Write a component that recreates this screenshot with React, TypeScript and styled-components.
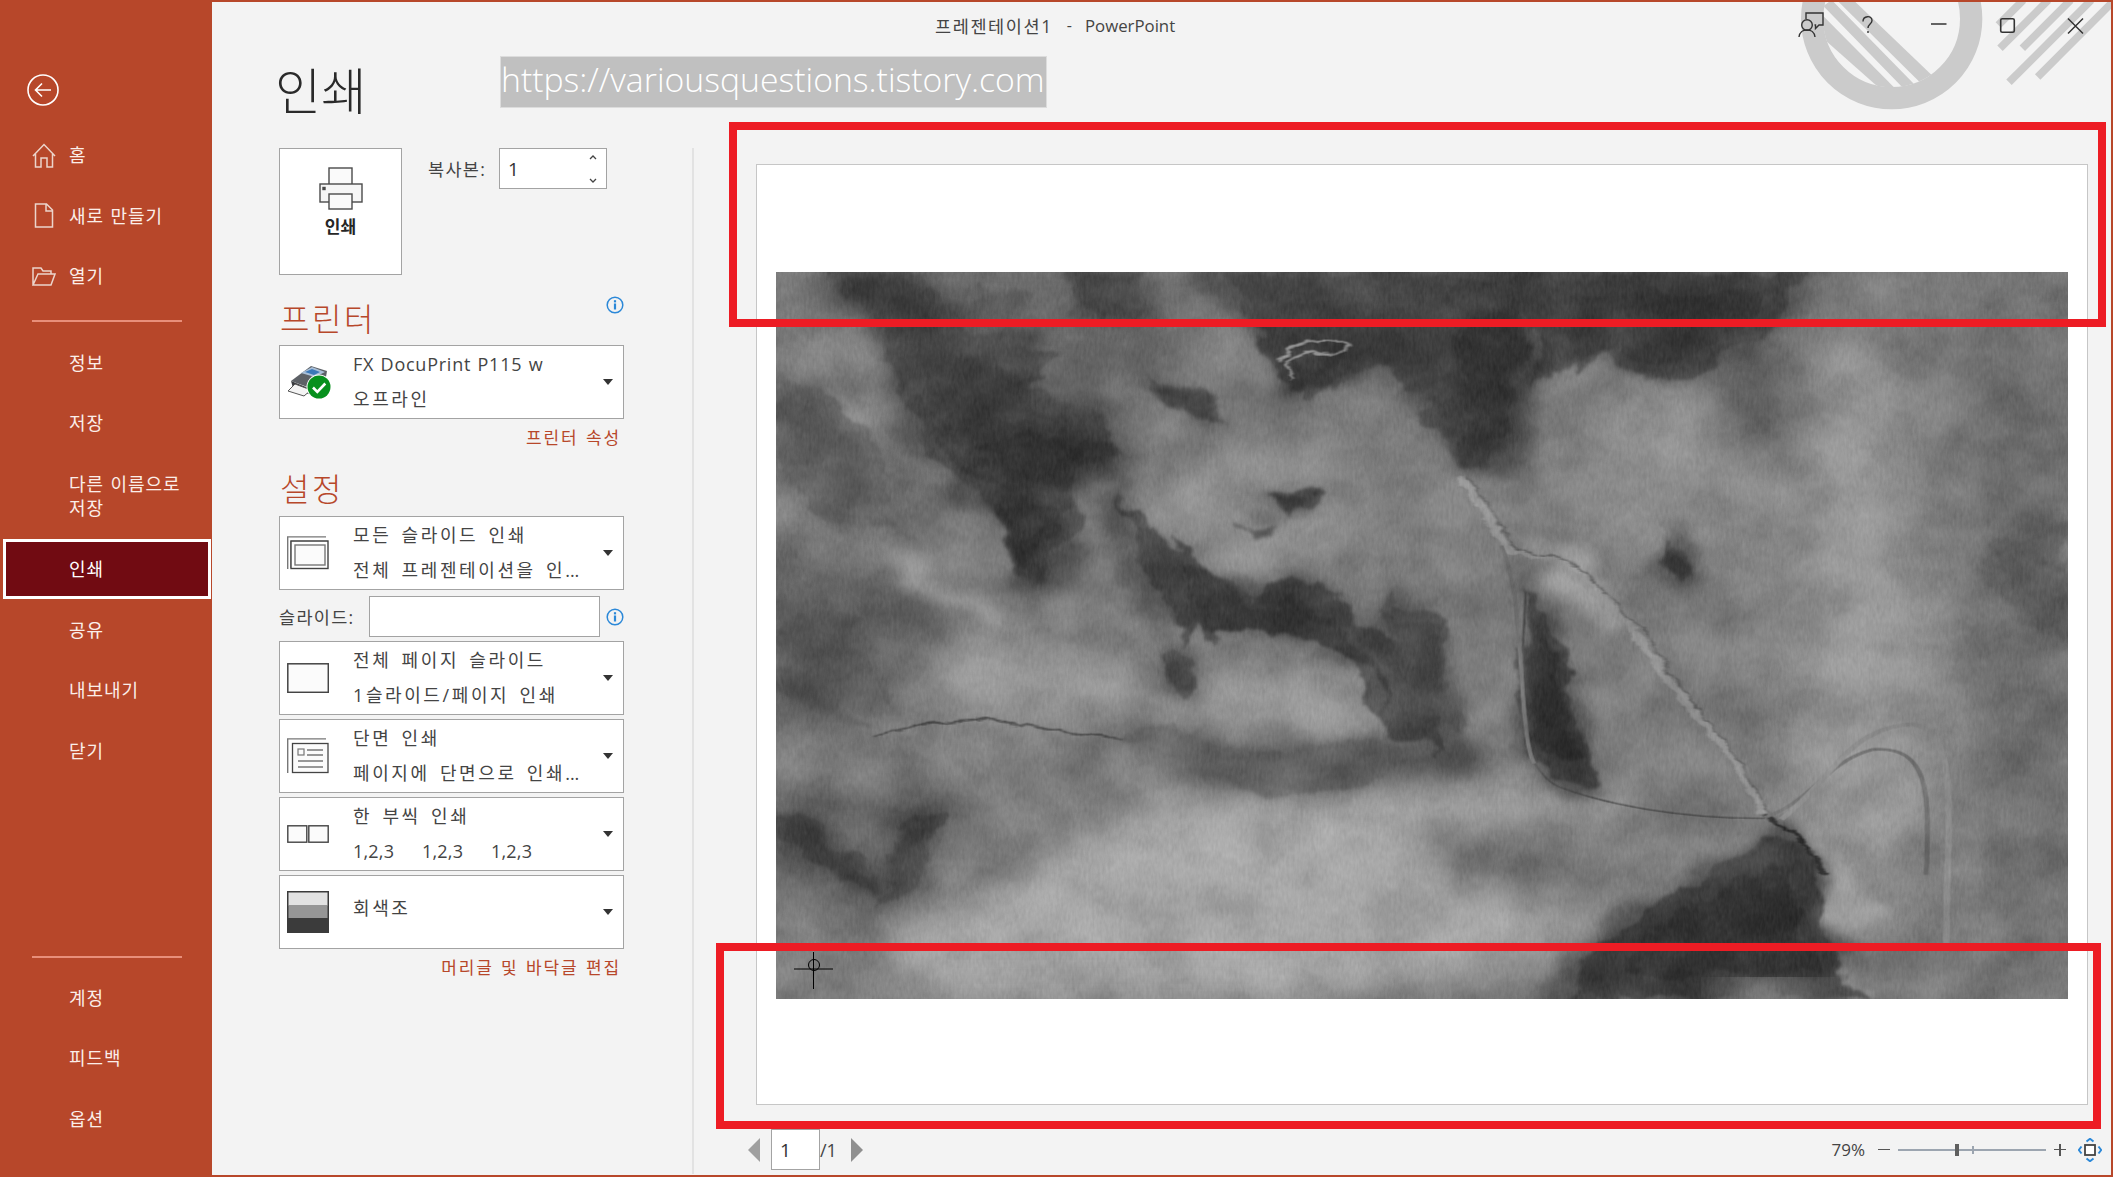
import React from "react";
import styled, { createGlobalStyle } from "styled-components";

const ACCENT = "#b7472a";
const BLUE = "#2b88d8";

const Global = createGlobalStyle`
  html, body { margin: 0; padding: 0; background: #f3f3f3; }
  body { font-family: "Open Sans", "Noto Sans CJK KR", sans-serif; color: #444; }
  * { box-sizing: border-box; }
`;

const Window = styled.div`
  position: relative;
  width: 2113px;
  height: 1177px;
  overflow: hidden;
  display: grid;
  grid-template-columns: 212px 1fr;
  background: #f3f3f3;
  border-top: 2px solid ${ACCENT};
  border-right: 2px solid ${ACCENT};
  border-bottom: 2px solid ${ACCENT};
`;

const Sidebar = styled.nav`
  background: ${ACCENT};
  display: flex;
  flex-direction: column;
  padding-top: 72px;
  color: #fbeee9;
  height: 1175px;
`;
const BackButton = styled.div`
  width: 32px;
  height: 32px;
  margin: 0 0 19px 27px;
`;
const NavItem = styled.div<{ $tall?: boolean; $active?: boolean }>`
  display: flex;
  align-items: center;
  height: ${(p) => (p.$tall ? 85 : 60.5)}px;
  padding-left: 32px;
  font-size: 18px;
  letter-spacing: 0.9px;
  word-spacing: 1px;
  line-height: 24px;
  flex: none;
  ${(p) =>
    p.$active &&
    `margin:0 1px 1px 3px;background:#710b12;border:3px solid #fff;color:#fff;padding-left:26px;height:60px;`}
`;
const NavIcon = styled.span`
  width: 37px;
  flex: none;
  display: flex;
  align-items: center;
`;
const NavRule = styled.div<{ $auto?: boolean }>`
  height: 2px;
  flex: none;
  background: #e88f7a;
  margin: ${(p) => (p.$auto ? "auto 30px 10px 32px" : "13px 30px 11px 32px")};
`;
const NavBottom = styled.div`
  display: flex;
  flex-direction: column;
  margin-bottom: 28px;
`;

const Main = styled.main`
  display: flex;
  flex-direction: column;
  min-width: 0;
  position: relative;
`;
const Deco = styled.svg`
  position: absolute;
  top: -2px;
  pointer-events: none;
`;
const TitleBar = styled.header`
  position: relative;
  height: 46px;
  display: flex;
  align-items: center;
  padding-left: 723px;
  font-size: 17.5px;
  letter-spacing: 1.6px;
  color: #444;
  white-space: pre;
`;
const TitleLatin = styled.span`
  font-size: 16.8px;
  letter-spacing: 0;
  margin-left: 13px;
`;
const TitleDash = styled.span`
  font-size: 16px;
  letter-spacing: 0;
  margin-left: 14px;
`;
const WinIcon = styled.svg`
  position: absolute;
  top: 0;
  left: 0;
  color: #333;
`;

const Body = styled.div`
  flex: 1;
  display: flex;
  min-height: 0;
`;
const PrintPanel = styled.section`
  width: 480px;
  flex: none;
  padding-left: 67px;
  padding-right: 68px;
`;
const PageTitle = styled.h1`
  margin: 0 0 12px -4px;
  height: 88px;
  line-height: 86px;
  font-size: 50px;
  font-weight: 300;
  color: #2a2a2a;
`;
const TopRow = styled.div`
  display: flex;
  height: 127px;
`;
const PrintButton = styled.div`
  width: 123px;
  height: 127px;
  background: #fff;
  border: 1px solid #a3a3a3;
  display: flex;
  flex-direction: column;
  align-items: center;
  padding-top: 18px;
`;
const PrintLabel = styled.span`
  font-size: 17px;
  font-weight: 700;
  color: #262626;
  line-height: 24px;
  margin-top: 5px;
`;
const Copies = styled.div`
  display: flex;
  align-items: center;
  height: 41px;
  margin-left: 26px;
`;
const FieldLabel = styled.span<{ $w: number }>`
  width: ${(p) => p.$w}px;
  font-size: 17.5px;
  letter-spacing: 1.3px;
  line-height: 38px;
  color: #444;
  flex: none;
`;
const Spin = styled.div`
  width: 108px;
  height: 41px;
  background: #fff;
  border: 1px solid #a3a3a3;
  display: flex;
  align-items: center;
  justify-content: space-between;
  padding: 0 8px;
  font-size: 19px;
  color: #333;
`;
const SpinArrows = styled.svg`
  display: block;
`;
const HeadRow = styled.div<{ $h: number; $pt: number }>`
  height: ${(p) => p.$h}px;
  padding-top: ${(p) => p.$pt}px;
  display: flex;
  justify-content: space-between;
  align-items: flex-start;
`;
const SectionHead = styled.h2<{ $mt?: number }>`
  margin: ${(p) => p.$mt ?? 0}px 0 0 1px;
  font-size: 32px;
  line-height: 40px;
  font-weight: 300;
  letter-spacing: 2.5px;
  color: ${ACCENT};
`;
const InfoWrap = styled.svg`
  width: 18px;
  height: 18px;
  flex: none;
`;
const Select = styled.div<{ $mt?: number }>`
  position: relative;
  height: 74px;
  margin-top: ${(p) => p.$mt ?? 0}px;
  background: #fff;
  border: 1px solid #a3a3a3;
  display: flex;
  align-items: center;
  padding-left: 7px;
`;
const SelectIcon = styled.span`
  width: 66px;
  flex: none;
  display: flex;
  align-items: center;
`;
const Lines = styled.div<{ $single?: boolean }>`
  flex: 1;
  padding-bottom: ${(p) => (p.$single ? 8 : 0)}px;
  font-size: 18px;
  line-height: 35px;
  letter-spacing: 2.6px;
  word-spacing: 3px;
  color: #444;
  white-space: pre;
`;
const Latin = styled.span`
  letter-spacing: 0.75px;
  word-spacing: 1px;
`;
const Dots = styled.span`
  letter-spacing: 0;
`;
const Collation = styled.span`
  display: inline-block;
  width: 69px;
  letter-spacing: 0.2px;
`;
const Caret = styled.span`
  position: absolute;
  right: 10px;
  top: 33px;
  width: 0;
  height: 0;
  border-left: 5.5px solid transparent;
  border-right: 5.5px solid transparent;
  border-top: 6px solid #333;
`;
const LinkRow = styled.div`
  height: 36px;
  display: flex;
  align-items: center;
  justify-content: flex-end;
  padding: 0 3px 2px 0;
  font-size: 17px;
  letter-spacing: 1.9px;
  word-spacing: 1px;
  color: ${ACCENT};
`;
const SlideRow = styled.div`
  display: flex;
  align-items: center;
  height: 41px;
  margin-top: 6px;
`;
const SlideInput = styled.div`
  width: 231px;
  height: 41px;
  background: #fff;
  border: 1px solid #a3a3a3;
  margin-right: 6px;
  flex: none;
`;
const VRule = styled.div`
  width: 2px;
  flex: none;
  background: #e2e2e2;
  margin-top: 100px;
  margin-bottom: 3px;
`;

const Preview = styled.section`
  flex: 1;
  min-width: 0;
  padding: 116px 0 0 54px;
`;
const Page = styled.div`
  position: relative;
  width: 1332px;
  height: 941px;
  margin-left: 8px;
  background: #fff;
  border: 1px solid #c6c6c6;
  padding: 107px 0 0 19px;
`;
const Texture = styled.svg`
  display: block;
  width: 1292px;
  height: 727px;
`;
const Pager = styled.div`
  display: flex;
  align-items: center;
  height: 41px;
  margin-top: 24px;
`;
const PagerArrow = styled.span<{ $dir: "l" | "r" }>`
  width: 0;
  height: 0;
  border-top: 12px solid transparent;
  border-bottom: 12px solid transparent;
  ${(p) =>
    p.$dir === "l"
      ? "border-right: 12px solid #9f9f9f; margin-right: 11px;"
      : "border-left: 12px solid #8f8f8f; margin-left: 14px;"}
`;
const PageInput = styled.div`
  width: 49px;
  height: 41px;
  background: #fff;
  border: 1px solid #a3a3a3;
  display: flex;
  align-items: center;
  padding-left: 8px;
  font-size: 19px;
  color: #333;
`;
const PageTotal = styled.span`
  font-size: 18px;
  color: #444;
`;
const Zoom = styled.div`
  margin-left: auto;
  margin-right: 9px;
  display: flex;
  align-items: center;
`;
const ZoomPct = styled.span`
  font-size: 17px;
  color: #444;
  margin-right: 13px;
`;
const ZoomBtn = styled.span`
  position: relative;
  width: 12px;
  height: 12px;
  &::before {
    content: "";
    position: absolute;
    left: 0;
    right: 0;
    top: 5px;
    height: 1.5px;
    background: #555;
  }
`;
const ZoomPlus = styled(ZoomBtn)`
  &::after {
    content: "";
    position: absolute;
    top: 0;
    bottom: 0;
    left: 5px;
    width: 1.5px;
    background: #555;
  }
`;
const Track = styled.div`
  position: relative;
  width: 148px;
  height: 2px;
  margin: 0 8px;
  background: #9ca5b0;
`;
const Thumb = styled.span`
  position: absolute;
  left: 57px;
  top: -5px;
  width: 4px;
  height: 12px;
  background: #5f5f5f;
`;
const Tick = styled.span`
  position: absolute;
  left: 74px;
  top: -3px;
  width: 2px;
  height: 8px;
  background: #9ca5b0;
`;
const FitIcon = styled.svg`
  margin-left: 12px;
`;

const Watermark = styled.div`
  position: absolute;
  left: 500px;
  top: 54px;
  width: 547px;
  height: 52px;
  background: #c0c0c0;
  border: 1px solid #dcdcdc;
  color: #fff;
  font-family: "Open Sans", sans-serif;
  font-size: 33.75px;
  font-weight: 300;
  line-height: 45px;
  white-space: nowrap;
`;
const RedBox = styled.div<{ $l: number; $t: number; $w: number; $h: number }>`
  position: absolute;
  left: ${(p) => p.$l}px;
  top: ${(p) => p.$t}px;
  width: ${(p) => p.$w}px;
  height: ${(p) => p.$h}px;
  border: 8px solid #ed1c24;
  pointer-events: none;
`;
const Crosshair = styled.svg`
  position: absolute;
  left: 37px;
  top: 787px;
  color: #000;
`;

const Info = () => (
  <InfoWrap viewBox="0 0 18 18">
    <circle cx="9" cy="9" r="7.8" fill="none" stroke={BLUE} strokeWidth="1.5" />
    <rect x="7.9" y="7.5" width="2.2" height="6" fill={BLUE} />
    <rect x="7.9" y="4.2" width="2.2" height="2.2" fill={BLUE} />
  </InfoWrap>
);

const icoProps = { fill: "none", stroke: "#444", strokeWidth: 1.4 };
const AllSlides = () => (
  <svg width="42" height="34" viewBox="0 0 42 34">
    <path d="M.7 33V.9H39" fill="none" stroke="#777" strokeWidth="1.4" />
    <path d="M3.5 32V5H41" fill="none" stroke="#aaa" strokeWidth="1" />
    <rect x="4" y="5" width="37" height="27.5" {...icoProps} />
    <rect x="8" y="9" width="30" height="20" fill="#fbfbfb" stroke="#777" strokeWidth="1.4" />
  </svg>
);
const FullPage = () => (
  <svg width="42" height="30" viewBox="0 0 42 30">
    <rect x=".8" y=".8" width="40.5" height="28.5" fill="#fbfbfb" stroke="#444" strokeWidth="1.5" />
  </svg>
);
const Sided = () => (
  <svg width="42" height="36" viewBox="0 0 42 36">
    <path d="M.7 35V.9H39" fill="none" stroke="#777" strokeWidth="1.4" />
    <rect x="5.5" y="5.5" width="35.5" height="29" fill="#fbfbfb" stroke="#444" strokeWidth="1.3" />
    <rect x="11" y="11" width="6" height="6" fill="none" stroke="#777" strokeWidth="1.2" />
    <path d="M20 12h16M20 17h16M11 23h25M11 29h25" stroke="#777" strokeWidth="1.4" />
  </svg>
);
const Collate = () => (
  <svg width="42" height="18" viewBox="0 0 42 18">
    <rect x=".8" y=".8" width="19" height="16.4" fill="#fbfbfb" stroke="#444" strokeWidth="1.4" />
    <rect x="21.8" y=".8" width="19.4" height="16.4" fill="#fbfbfb" stroke="#444" strokeWidth="1.4" />
  </svg>
);
const Gray = () => (
  <svg width="42" height="42" viewBox="0 0 42 42">
    <rect width="42" height="42" fill="#3b3b3b" />
    <rect x="1.5" y="1.5" width="39" height="13" fill="#e2e2e2" />
    <rect x="1.5" y="14" width="39" height="13" fill="#969696" />
  </svg>
);
const PrinterOk = () => (
  <svg width="46" height="38" viewBox="0 0 46 38">
    <path d="M4 18 L24 3 L40 8 L38 20 L26 26 Z" fill="#5d6166" />
    <path d="M14 10 L25 4 L38 9 L28 14 Z" fill="#a9bfd8" />
    <path d="M18 9 L25 6 L33 9 L27 12 Z" fill="#3b78b8" />
    <path d="M4 18 L24 26 L24 32 L6 25 Z" fill="#3a3c40" />
    <path d="M1 28 L8 21 L24 27 L17 33 Z" fill="#f4f4f4" stroke="#555" strokeWidth="1" />
    <circle cx="32" cy="24" r="12.5" fill="#fff" />
    <circle cx="32" cy="24" r="11.5" fill="#07901d" />
    <path d="M26 24.5l4.3 4.3 8-8.3" fill="none" stroke="#fff" strokeWidth="2.6" />
  </svg>
);

type Rough = [string, string];
const SOFT: Rough[] = [
  ["450,1120 1000,1120 1060,1250 900,1340 1000,1450 640,1568 150,1568 120,1400 300,1300", "#a8a8a8"],
  ["1240,220 1330,120 1420,900 1370,1400 1260,1200 1220,800", "#989898"],
  ["180,800 420,820 470,950 350,960 160,970", "#9c9c9c"],
  ["540,860 700,860 730,1000 580,1020 500,1000", "#a0a0a0"],
  ["1000,260 1220,280 1200,520 1040,640 950,480", "#8e8e8e"],
  ["1470,0 1568,0 1568,1568 1500,1568 1470,700", "#6a6a6a"],
  ["0,600 120,620 220,780 120,960 0,1000", "#626262"],
  ["790,1190 1010,1180 1020,1290 880,1340 780,1290", "#747474"],
  ["1050,130 1240,130 1240,400 1180,400 1130,240", "#5e5e5e"],
  ["0,0 1250,0 1250,90 0,90", "#646464"],
  ["130,100 450,100 420,480 300,500 170,380", "#646464"],
  ["420,1000 800,1000 760,1110 500,1120", "#6a6a6a"],
  ["560,100 900,100 880,420 760,300", "#666666"],
  ["0,1120 210,1120 190,1400 100,1400 0,1300", "#606060"],
  ["450,400 700,420 720,600 560,660 470,560", "#919191"],
];
const DARK: Rough[] = [
  ["910,0 1250,0 1230,80 1190,140 1120,225 1070,235 1000,170 960,190 920,260", "#323232"],
  ["60,0 190,0 200,110 120,120", "#3e3e3e"],
  ["240,30 300,60 280,110 240,90", "#505050"],
  ["350,0 450,0 440,95 380,110", "#3c3c3c"],
  ["130,120 220,120 340,170 300,250 400,310 410,390 350,470 365,540 310,690 270,520 190,400 150,260", "#3a3a3a"],
  ["190,340 350,330 410,380 340,470 280,470 225,420", "#2c2c2c"],
  ["260,480 350,480 320,670 295,660", "#2c2c2c"],
  ["450,240 510,250 560,330 500,310", "#3c3c3c"],
  ["540,0 860,0 905,200 880,420 830,420 800,300 720,180 640,270 590,120", "#3e3e3e"],
  ["820,20 910,20 890,340 835,420 825,280", "#2e2e2e"],
  ["420,470 500,640 590,700 630,660 730,780 805,900 805,1040 750,1000 730,850 640,790 510,760 500,810 450,680", "#2e2e2e"],
  ["740,680 800,750 830,1000 780,940 745,820", "#424242"],
  ["915,690 965,860 992,1105 955,1105 905,1020 902,900", "#282828"],
  ["1085,580 1115,600 1115,660 1095,680 1075,620", "#303030"],
  ["600,470 650,470 655,520 620,540", "#303030"],
  ["560,540 600,545 595,570 565,565", "#4a4a4a"],
  ["1000,1440 1130,1300 1210,1220 1260,1260 1275,1450 1325,1568 960,1568", "#2a2a2a"],
  ["0,1170 50,1190 100,1260 130,1360 60,1280 0,1230", "#3c3c3c"],
  ["150,1190 200,1170 185,1300 130,1370 130,1280", "#3a3a3a"],
  ["0,690 90,760 70,900 120,980 40,950 0,880", "#505050"],
  ["420,990 520,1090 600,1130 720,1100 800,1040 730,1010 600,1030 480,990", "#5c5c5c"],
  ["0,240 60,250 130,380 150,560 60,540 0,400", "#5a5a5a"],
  ["1470,600 1568,540 1568,800 1500,720", "#555555"],
  ["480,810 510,830 500,920 480,900", "#404040"],
  ["30,800 120,810 130,930 60,950", "#555555"],
  ["590,120 720,130 700,220 620,260", "#2e2e2e"],
];
const LIGHT: Rough[] = [
  ["60,250 110,300 130,360 90,340", "#989898"],
  ["130,600 190,610 250,700 280,790 230,740 150,670", "#9a9a9a"],
  ["1210,1150 1290,1230 1340,1370 1310,1450 1275,1400 1270,1260", "#a0a0a0"],
  ["1290,1480 1340,1568 1310,1568", "#a8a8a8"],
  ["900,570 960,580 1040,760 1000,780", "#9c9c9c"],
];

// Terraced copies of a polygon around its centre give the banded look of the marble.
const scalePoints = (pts: string, k: number) => {
  const xy = pts.split(" ").map((s) => s.split(",").map(Number));
  const cx = xy.reduce((a, p) => a + p[0], 0) / xy.length;
  const cy = xy.reduce((a, p) => a + p[1], 0) / xy.length;
  return xy.map((p) => `${cx + (p[0] - cx) * k},${cy + (p[1] - cy) * k}`).join(" ");
};

const Marble = () => (
  <Texture viewBox="0 0 1568 1568" preserveAspectRatio="none">
    <defs>
      <filter id="soft" x="-20%" y="-20%" width="140%" height="140%" colorInterpolationFilters="sRGB">
        <feGaussianBlur stdDeviation="30 38" />
      </filter>
      <filter id="rough" x="-20%" y="-20%" width="140%" height="140%" colorInterpolationFilters="sRGB">
        <feTurbulence type="fractalNoise" baseFrequency="0.018 0.014" numOctaves="6" seed="7" result="n" />
        <feDisplacementMap in="SourceGraphic" in2="n" scale="55" xChannelSelector="R" yChannelSelector="G" />
        <feGaussianBlur stdDeviation="2 3" />
      </filter>
      <filter id="roughSoft" x="-20%" y="-20%" width="140%" height="140%" colorInterpolationFilters="sRGB">
        <feTurbulence type="fractalNoise" baseFrequency="0.012 0.01" numOctaves="5" seed="21" result="n" />
        <feDisplacementMap in="SourceGraphic" in2="n" scale="80" xChannelSelector="R" yChannelSelector="G" />
        <feGaussianBlur stdDeviation="9 12" />
      </filter>
      <filter id="vein" x="-20%" y="-20%" width="140%" height="140%" colorInterpolationFilters="sRGB">
        <feTurbulence type="fractalNoise" baseFrequency="0.04" numOctaves="4" seed="3" result="n" />
        <feDisplacementMap in="SourceGraphic" in2="n" scale="16" xChannelSelector="R" yChannelSelector="G" />
        <feGaussianBlur stdDeviation="1 1.6" />
      </filter>
      <filter id="cloud" x="0" y="0" width="100%" height="100%" colorInterpolationFilters="sRGB">
        <feTurbulence type="fractalNoise" baseFrequency="0.014 0.009" numOctaves="6" seed="11" />
        <feColorMatrix type="matrix" values="1.8 0 0 0 -0.4  1.8 0 0 0 -0.4  1.8 0 0 0 -0.4  0 0 0 0 1" />
      </filter>
      <filter id="fine" x="0" y="0" width="100%" height="100%" colorInterpolationFilters="sRGB">
        <feTurbulence type="fractalNoise" baseFrequency="0.3 0.06" numOctaves="2" seed="5" />
        <feColorMatrix type="matrix" values="1 1 0 0 -0.5  1 1 0 0 -0.5  1 1 0 0 -0.5  0 0 0 0 0.05" />
      </filter>
    </defs>
    <rect width="1568" height="1568" fill="#7c7c7c" />
    <g filter="url(#soft)">
      {SOFT.map(([p, f], i) => (
        <polygon key={i} points={p} fill={f} />
      ))}
    </g>
    <g filter="url(#roughSoft)">
      {DARK.map(([p, f], i) => (
        <polygon key={i} points={scalePoints(p, 1.18)} fill={f} opacity="0.5" />
      ))}
      {LIGHT.map(([p, f], i) => (
        <polygon key={i} points={p} fill={f} />
      ))}
    </g>
    <g filter="url(#rough)">
      {DARK.map(([p, f], i) => (
        <polygon key={i} points={p} fill={f} opacity="0.58" />
      ))}
      {DARK.map(([p, f], i) => (
        <polygon key={i} points={scalePoints(p, 0.68)} fill={f} opacity="0.62" />
      ))}
    </g>
    <ellipse cx="1210" cy="1565" rx="62" ry="32" fill="#a0a0a0" filter="url(#soft)" />
    <g filter="url(#vein)" fill="none">
      <path d="M830 440 L890 600 L950 620 L1040 770 L1090 900 L1160 1040 L1200 1170" stroke="#959595" strokeWidth="11" />
      <path d="M838 440 L900 600 L965 620 L1052 770 L1100 900 L1165 1040 L1205 1170" stroke="#5e5e5e" strokeWidth="2.5" />
      <path d="M1200 1172 L1245 1225 L1275 1300" stroke="#2c2c2c" strokeWidth="6" />
      <path d="M610 190 Q650 120 700 160 Q680 190 650 170 M630 230 Q600 190 650 170" stroke="#909090" strokeWidth="5" />
      <path d="M120 1000 L180 975 L260 965 L340 990 L420 1005" stroke="#505050" strokeWidth="5" />
    </g>
    <g fill="none">
      <path d="M910 690 C906 860 890 1060 950 1110 C1010 1150 1100 1180 1200 1178" stroke="#4c4c4c" strokeWidth="3" />
      <path d="M880 590 C910 700 900 1000 920 1060" stroke="#707070" strokeWidth="5" />
      <path d="M1200 1176 C1260 1140 1270 1060 1330 1030 C1400 1020 1400 1120 1396 1300" stroke="#6e6e6e" strokeWidth="6" />
      <path d="M1220 1180 C1280 1100 1300 980 1380 975 C1440 990 1420 1200 1420 1450" stroke="#8c8c8c" strokeWidth="8" />
    </g>
    <rect width="1568" height="1568" filter="url(#cloud)" opacity="0.25" style={{ mixBlendMode: "soft-light" }} />
    <rect width="1568" height="1568" filter="url(#fine)" />
  </Texture>
);

export default function App() {
  return (
    <Window>
      <Global />
      <Sidebar>
        <BackButton>
          <svg width="32" height="32" viewBox="0 0 32 32" fill="none" stroke="#fff" strokeWidth="1.6">
            <circle cx="16" cy="16" r="15" />
            <path d="M24 16H9M15 9.5 8.5 16l6.5 6.5" />
          </svg>
        </BackButton>
        <NavItem>
          <NavIcon>
            <svg width="24" height="25" viewBox="0 0 24 25" fill="none" stroke="#ecd5cc" strokeWidth="1.5">
              <path d="M1 13 12 1.5 23 13M3.5 11v13H9v-9h6v9h5.5V11" />
            </svg>
          </NavIcon>
          홈
        </NavItem>
        <NavItem>
          <NavIcon>
            <svg width="24" height="25" viewBox="0 0 24 25" fill="none" stroke="#ecd5cc" strokeWidth="1.5">
              <path d="M3.5 1h11l6 6v17h-17zM14 1v7h6.500" />
            </svg>
          </NavIcon>
          새로 만들기
        </NavItem>
        <NavItem>
          <NavIcon>
            <svg width="24" height="19" viewBox="0 0 24 19" fill="none" stroke="#ecd5cc" strokeWidth="1.5">
              <path d="M1 18V1h8l2 3h8v3M1 18h18l4-11H6z" />
            </svg>
          </NavIcon>
          열기
        </NavItem>
        <NavRule />
        <NavItem>
          <NavIcon />
          정보
        </NavItem>
        <NavItem>
          <NavIcon />
          저장
        </NavItem>
        <NavItem $tall>
          <NavIcon />
          <span>
            다른 이름으로
            <br />
            저장
          </span>
        </NavItem>
        <NavItem $active>
          <NavIcon />
          인쇄
        </NavItem>
        <NavItem>
          <NavIcon />
          공유
        </NavItem>
        <NavItem>
          <NavIcon />
          내보내기
        </NavItem>
        <NavItem>
          <NavIcon />
          닫기
        </NavItem>
        <NavRule $auto />
        <NavBottom>
          <NavItem>
            <NavIcon />
            계정
          </NavItem>
          <NavItem>
            <NavIcon />
            피드백
          </NavItem>
          <NavItem>
            <NavIcon />
            옵션
          </NavItem>
        </NavBottom>
      </Sidebar>

      <Main>
        <Deco width="200" height="115" viewBox="0 0 600 345" style={{ left: 1578 }}>
          <defs>
            <clipPath id="ringIn">
              <circle cx="305" cy="56" r="206" />
            </clipPath>
          </defs>
          <circle cx="305" cy="56" r="238.500" fill="none" stroke="#cbcbcb" strokeWidth="67" />
          <g clipPath="url(#ringIn)" fill="#cbcbcb">
            <polygon points="190,0 425,225 388,245 140,0" />
            <polygon points="125,0 375,255 337,262 100,18" />
            <polygon points="90,38 318,268 265,262 60,80" />
          </g>
        </Deco>
        <Deco width="123" height="90" viewBox="0 0 369 270" style={{ left: 1778 }}>
          <g stroke="#cbcbcb" strokeWidth="23" fill="none">
            <path d="M25 75 100 0" />
            <path d="M30 145 175 0" />
            <path d="M97 145 242 0" />
            <path d="M57 247 304 0" />
            <path d="M143 231 369 5" />
          </g>
        </Deco>
        <TitleBar>
          프레젠테이션1
          <TitleDash>-</TitleDash>
          <TitleLatin>PowerPoint</TitleLatin>
          <WinIcon width="1899" height="46" viewBox="0 0 1899 46" fill="none" stroke="currentColor" strokeWidth="1.4">
            <circle cx="1595" cy="23" r="5.300" />
            <path d="M1587 35c1-6 4-7 8-7s7 1 8 7" />
            <path d="M1594 17v-6h17v12h-4l-3.500 3.500V23h-1" />
            <path d="M1719 22h15.500" strokeWidth="1.5" />
            <rect x="1788.700" y="16.700" width="13.600" height="13.600" rx="1.600" strokeWidth="1.6" />
            <path d="M1856 16.500 1871 31.500M1871 16.500 1856 31.500" strokeWidth="1.5" />
            <path d="M1651 19.500c0-6 9-6.500 9-1 0 3.500-4 3.500-4 7.500M1656 29v2" />
          </WinIcon>
        </TitleBar>
        <Body>
          <PrintPanel>
            <PageTitle>인쇄</PageTitle>
            <TopRow>
              <PrintButton>
                <svg width="44" height="43" viewBox="0 0 44 43" fill="#fafafa" stroke="#4a4a4a" strokeWidth="1.4">
                  <rect x="10" y="1" width="23" height="17" />
                  <rect x="1" y="17" width="42" height="18" fill="#f6f6f6" />
                  <rect x="10" y="27" width="23" height="15" />
                  <rect x="4" y="20.500" width="2" height="2" fill="#4a4a4a" />
                </svg>
                <PrintLabel>인쇄</PrintLabel>
              </PrintButton>
              <Copies>
                <FieldLabel $w={71}>복사본:</FieldLabel>
                <Spin>
                  1
                  <SpinArrows width="10" height="30" viewBox="0 0 10 30" fill="none" stroke="#444" strokeWidth="1.3">
                    <path d="M2 5 5 2l3 3M2 25l3 3 3-3" />
                  </SpinArrows>
                </Spin>
              </Copies>
            </TopRow>
            <HeadRow $h={70} $pt={21}>
              <SectionHead $mt={3}>프린터</SectionHead>
              <Info />
            </HeadRow>
            <Select>
              <SelectIcon>
                <PrinterOk />
              </SelectIcon>
              <Lines>
                <Latin>FX DocuPrint P115 w</Latin>
                {"\n"}오프라인
              </Lines>
              <Caret />
            </Select>
            <LinkRow>프린터 속성</LinkRow>
            <HeadRow $h={61} $pt={14}>
              <SectionHead>설정</SectionHead>
            </HeadRow>
            <Select>
              <SelectIcon>
                <AllSlides />
              </SelectIcon>
              <Lines>
                모든 슬라이드 인쇄{"\n"}전체 프레젠테이션을 인<Dots>...</Dots>
              </Lines>
              <Caret />
            </Select>
            <SlideRow>
              <FieldLabel $w={90}>슬라이드:</FieldLabel>
              <SlideInput />
              <Info />
            </SlideRow>
            <Select $mt={4}>
              <SelectIcon>
                <FullPage />
              </SelectIcon>
              <Lines>
                전체 페이지 슬라이드{"\n"}1슬라이드/페이지 인쇄
              </Lines>
              <Caret />
            </Select>
            <Select $mt={4}>
              <SelectIcon>
                <Sided />
              </SelectIcon>
              <Lines>
                단면 인쇄{"\n"}페이지에 단면으로 인쇄<Dots>...</Dots>
              </Lines>
              <Caret />
            </Select>
            <Select $mt={4}>
              <SelectIcon>
                <Collate />
              </SelectIcon>
              <Lines>
                한 부씩 인쇄{"\n"}
                <Collation>1,2,3</Collation>
                <Collation>1,2,3</Collation>
                <Collation>1,2,3</Collation>
              </Lines>
              <Caret />
            </Select>
            <Select $mt={4}>
              <SelectIcon>
                <Gray />
              </SelectIcon>
              <Lines $single>회색조</Lines>
              <Caret />
            </Select>
            <LinkRow>머리글 및 바닥글 편집</LinkRow>
          </PrintPanel>
          <VRule />
          <Preview>
            <Page>
              <Marble />
              <Crosshair width="40" height="38" viewBox="0 0 40 38" fill="none" stroke="currentColor">
                <path d="M0 17h39M19.500 0v37" />
                <circle cx="20" cy="13" r="5.500" />
              </Crosshair>
            </Page>
            <Pager>
              <PagerArrow $dir="l" />
              <PageInput>1</PageInput>
              <PageTotal>/1</PageTotal>
              <PagerArrow $dir="r" />
              <Zoom>
                <ZoomPct>79%</ZoomPct>
                <ZoomBtn />
                <Track>
                  <Thumb />
                  <Tick />
                </Track>
                <ZoomPlus />
                <FitIcon width="24" height="24" viewBox="0 0 24 24" fill="none">
                  <path d="M8.500 3.500 12 .8l3.500 2.700M8.500 20.500l3.500 2.700 3.500-2.700M3.500 8.500.8 12l2.700 3.500M20.500 8.500l2.700 3.500-2.700 3.500" stroke={BLUE} strokeWidth="2" />
                  <rect x="7" y="7" width="10" height="10" fill="#fff" stroke="#444" strokeWidth="1.8" />
                </FitIcon>
              </Zoom>
            </Pager>
          </Preview>
        </Body>
      </Main>

      <Watermark>https://variousquestions.tistory.com</Watermark>
      <RedBox $l={729} $t={120} $w={1377} $h={205} />
      <RedBox $l={716} $t={941} $w={1385} $h={186} />
    </Window>
  );
}
